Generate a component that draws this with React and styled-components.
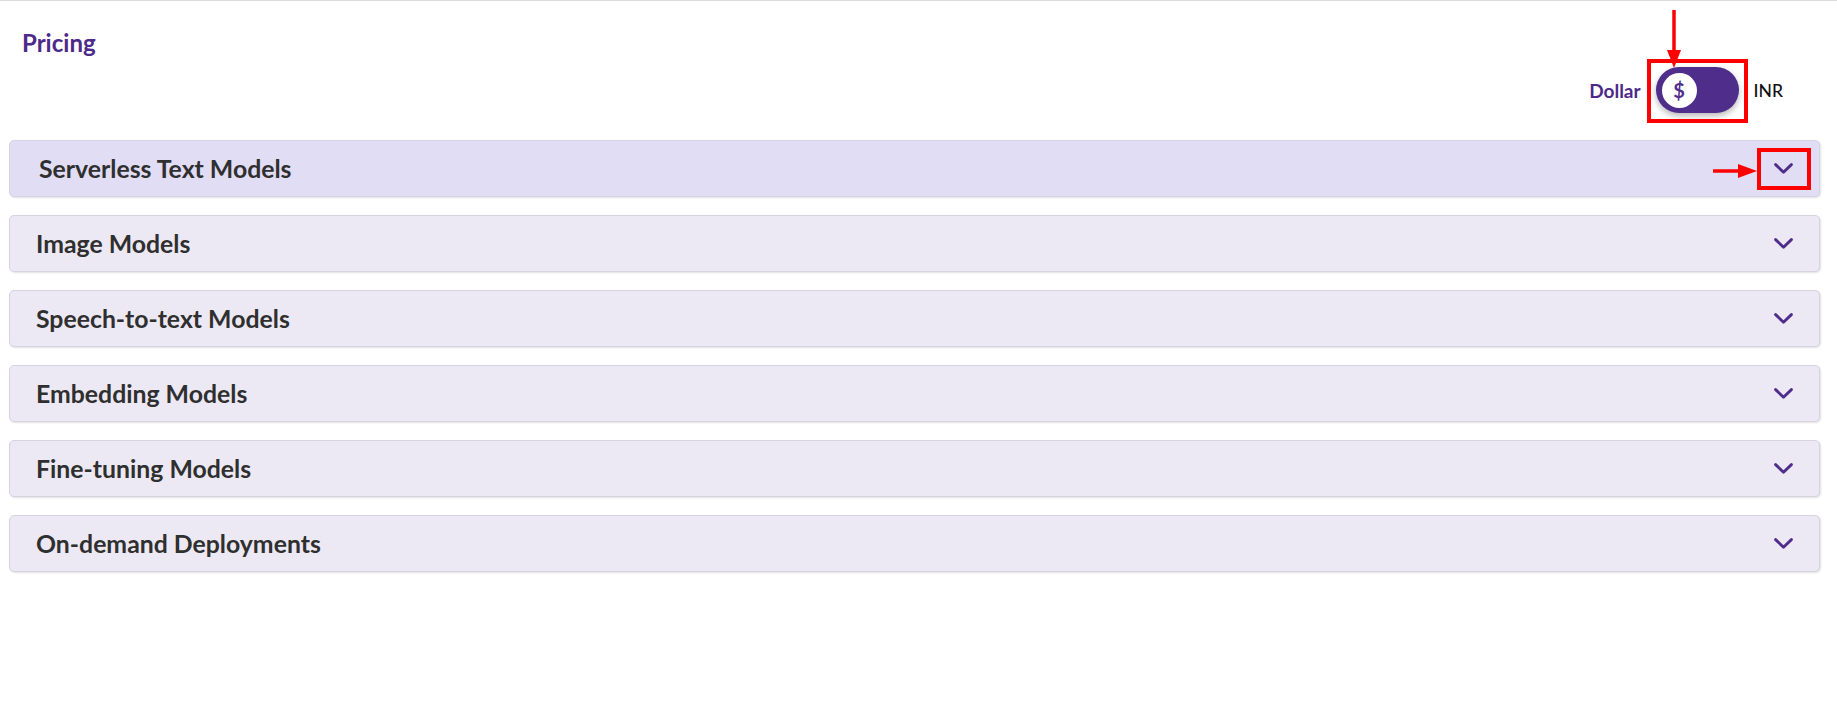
import React from "react";
import styled, { createGlobalStyle } from "styled-components";

const GlobalStyle = createGlobalStyle`
  html, body { margin: 0; padding: 0; background: #ffffff; }
  body { font-family: Lato, "Noto Sans", sans-serif; color: #333333; }
  * { box-sizing: border-box; }
`;

const Page = styled.div`
  border-top: 1px solid #dcdcdc;
  padding: 28px 17px 40px 9px;
  min-height: 706px;
`;

const Title = styled.h2`
  margin: 0 0 0 13px;
  font-size: 24px;
  line-height: 28px;
  font-weight: 700;
  color: #4d2a8a;
`;

const CurrencyRow = styled.div`
  display: flex;
  justify-content: flex-end;
  align-items: center;
  gap: 15px;
  margin-top: 10px;
  padding-right: 37px;
  height: 46px;
`;

const CurrencyLabel = styled.span`
  font-size: ${(p) => (p.$active ? 19 : 17.5)}px;
  font-weight: ${(p) => (p.$active ? 700 : 500)};
  color: ${(p) => (p.$active ? "#4d2a8a" : "#111111")};
`;

const ToggleWrap = styled.div`
  position: relative;
`;

const Track = styled.button`
  display: flex;
  align-items: center;
  width: 83px;
  height: 46px;
  padding: 0 6px;
  border: none;
  border-radius: 23px;
  background: #4f2d8a;
  box-shadow: 0 3px 6px rgba(0, 0, 0, 0.28);
  cursor: pointer;
`;

const Knob = styled.span`
  display: flex;
  align-items: center;
  justify-content: center;
  width: 35px;
  height: 35px;
  border-radius: 50%;
  background: #ffffff;
  color: #4f2d8a;
  font-family: Lato, sans-serif;
  font-weight: 700;
  font-size: 20px;
`;

const Highlight = styled.div`
  position: absolute;
  border: 4px solid #ff0000;
  pointer-events: none;
`;

const Arrow = styled.svg`
  position: absolute;
  overflow: visible;
  pointer-events: none;
`;

const List = styled.div`
  display: flex;
  flex-direction: column;
  gap: 18px;
  margin-top: 27px;
`;

const Item = styled.div`
  position: relative;
  display: flex;
  align-items: center;
  justify-content: space-between;
  height: 57px;
  padding: 0 26px 0 ${(p) => (p.$active ? 29 : 26)}px;
  border: 1px solid #d6d3e3;
  border-radius: 5px;
  background: ${(p) => (p.$active ? "#e1ddf5" : "#ece9f5")};
  box-shadow: 1px 1px 2px rgba(0, 0, 0, 0.12);
`;

const ItemTitle = styled.span`
  font-size: 24.8px;
  font-weight: 700;
  color: #2f2f2f;
`;

const ChevronBox = styled.span`
  position: relative;
  display: flex;
  align-items: center;
  justify-content: center;
  width: 19px;
  height: 12px;
`;

const Chevron = () => (
  <svg width="19" height="11" viewBox="0 0 19 11" fill="none">
    <path
      d="M1.6 1.6 L9.5 9.2 L17.4 1.6"
      stroke="#4f2d8a"
      strokeWidth="2.9"
      strokeLinecap="round"
      strokeLinejoin="round"
    />
  </svg>
);

const items = [
  "Serverless Text Models",
  "Image Models",
  "Speech-to-text Models",
  "Embedding Models",
  "Fine-tuning Models",
  "On-demand Deployments",
];

export default function App() {
  return (
    <>
      <GlobalStyle />
      <Page>
        <Title>Pricing</Title>
        <CurrencyRow>
          <CurrencyLabel $active>Dollar</CurrencyLabel>
          <ToggleWrap>
            <Track aria-label="currency toggle">
              <Knob>$</Knob>
            </Track>
            <Highlight style={{ left: -9, right: -9, top: -8, bottom: -10 }} />
            <Arrow
              width="18"
              height="58"
              viewBox="0 0 18 58"
              style={{ left: 9, top: -57 }}
            >
              <line x1="9" y1="0" x2="9" y2="44" stroke="#ff0000" strokeWidth="3.5" />
              <polygon points="2,40 16,40 9,58" fill="#ff0000" />
            </Arrow>
          </ToggleWrap>
          <CurrencyLabel>INR</CurrencyLabel>
        </CurrencyRow>
        <List>
          {items.map((t, i) => (
            <Item key={t} $active={i === 0}>
              <ItemTitle>{t}</ItemTitle>
              <ChevronBox>
                <Chevron />
                {i === 0 && (
                  <>
                    <Highlight style={{ left: -17, right: -18, top: -15, bottom: -15 }} />
                    <Arrow
                      width="44"
                      height="16"
                      viewBox="0 0 44 16"
                      style={{ left: -61, top: 0 }}
                    >
                      <line x1="0" y1="8" x2="30" y2="8" stroke="#ff0000" strokeWidth="3.5" />
                      <polygon points="25,1 25,15 44,8" fill="#ff0000" />
                    </Arrow>
                  </>
                )}
              </ChevronBox>
            </Item>
          ))}
        </List>
      </Page>
    </>
  );
}
